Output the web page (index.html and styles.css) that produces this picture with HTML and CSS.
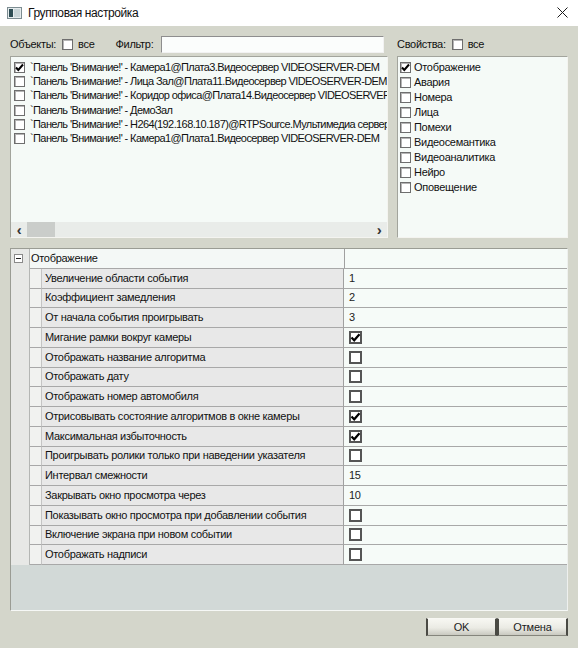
FILE: index.html
```html
<!DOCTYPE html>
<html lang="ru">
<head>
  <meta charset="UTF-8" />
  <title>Групповая настройка</title>
  <link rel="stylesheet" href="styles.css">
</head>
<body>
<div class="window">

  <!-- заголовок окна -->
  <div class="titlebar">
    <svg class="app-icon" width="16" height="14" viewBox="0 0 16 14">
      <rect x="0.5" y="1.5" width="14" height="11" fill="#e6ecee" stroke="#7d8d92"/>
      <rect x="2" y="3" width="4" height="8" fill="#2e4d54"/>
      <rect x="7" y="3" width="6" height="8" fill="#c9d5d8"/>
    </svg>
    <span class="title">Групповая настройка</span>
    <svg class="close" width="11" height="11" viewBox="0 0 11 11">
      <path d="M0.5 0.5 L10.5 10.5 M10.5 0.5 L0.5 10.5" stroke="#1a1a1a" stroke-width="1"/>
    </svg>
  </div>

  <div class="content">
    <div class="top">
      <div class="pane objects-pane">
        <div class="filter-row">
          <span>Объекты:</span>
          <span class="cb"></span>
          <span>все</span>
          <span class="filter-label">Фильтр:</span>
          <input class="filter" type="text">
        </div>
        <div class="listbox">
          <div class="items objects">
            <div class="item"><span class="cb"><svg viewBox="0 0 11 11"><path d="M2 5.5 L4.3 8 L9 2.5" /></svg></span><span class="text">`Панель 'Внимание!' - Камера1@Плата3.Видеосервер VIDEOSERVER-DEM</span></div>
            <div class="item"><span class="cb"></span><span class="text">`Панель 'Внимание!' - Лица Зал@Плата11.Видеосервер VIDEOSERVER-DEM</span></div>
            <div class="item"><span class="cb"></span><span class="text">`Панель 'Внимание!' - Коридор офиса@Плата14.Видеосервер VIDEOSERVER-DEM</span></div>
            <div class="item"><span class="cb"></span><span class="text">`Панель 'Внимание!' - ДемоЗал</span></div>
            <div class="item"><span class="cb"></span><span class="text">`Панель 'Внимание!' - H264(192.168.10.187)@RTPSource.Мультимедиа сервер VIDEOSERVER-DEM</span></div>
            <div class="item"><span class="cb"></span><span class="text">`Панель 'Внимание!' - Камера1@Плата1.Видеосервер VIDEOSERVER-DEM</span></div>
          </div>
          <div class="hscroll">
            <span class="arrow">&lsaquo;</span>
            <span class="thumb"></span>
            <span class="track"></span>
            <span class="arrow">&rsaquo;</span>
          </div>
        </div>
      </div>

      <div class="pane props-pane">
        <div class="filter-row">
          <span>Свойства:</span>
          <span class="cb"></span>
          <span>все</span>
        </div>
        <div class="listbox">
          <div class="items props">
            <div class="item"><span class="cb"><svg viewBox="0 0 11 11"><path d="M2 5.5 L4.3 8 L9 2.5" /></svg></span><span class="text">Отображение</span></div>
            <div class="item"><span class="cb"></span><span class="text">Авария</span></div>
            <div class="item"><span class="cb"></span><span class="text">Номера</span></div>
            <div class="item"><span class="cb"></span><span class="text">Лица</span></div>
            <div class="item"><span class="cb"></span><span class="text">Помехи</span></div>
            <div class="item"><span class="cb"></span><span class="text">Видеосемантика</span></div>
            <div class="item"><span class="cb"></span><span class="text">Видеоаналитика</span></div>
            <div class="item"><span class="cb"></span><span class="text">Нейро</span></div>
            <div class="item"><span class="cb"></span><span class="text">Оповещение</span></div>
          </div>
        </div>
      </div>
    </div>

    <!-- таблица свойств -->
    <div class="grid">
      <div class="row group">
        <div class="gutter"><span class="expander"></span></div>
        <div class="name">Отображение</div>
        <div class="value"></div>
      </div>
      <div class="row"><div class="gutter"></div><div class="indent"></div><div class="name">Увеличение области события</div><div class="value">1</div></div>
      <div class="row"><div class="gutter"></div><div class="indent"></div><div class="name">Коэффициент замедления</div><div class="value">2</div></div>
      <div class="row"><div class="gutter"></div><div class="indent"></div><div class="name">От начала события проигрывать</div><div class="value">3</div></div>
      <div class="row"><div class="gutter"></div><div class="indent"></div><div class="name">Мигание рамки вокруг камеры</div><div class="value"><span class="gcb"><svg viewBox="0 0 13 13"><path d="M2.5 6.5 L5.2 9.3 L10.5 3.2" /></svg></span></div></div>
      <div class="row"><div class="gutter"></div><div class="indent"></div><div class="name">Отображать название алгоритма</div><div class="value"><span class="gcb"></span></div></div>
      <div class="row"><div class="gutter"></div><div class="indent"></div><div class="name">Отображать дату</div><div class="value"><span class="gcb"></span></div></div>
      <div class="row"><div class="gutter"></div><div class="indent"></div><div class="name">Отображать номер автомобиля</div><div class="value"><span class="gcb"></span></div></div>
      <div class="row"><div class="gutter"></div><div class="indent"></div><div class="name">Отрисовывать состояние алгоритмов в окне камеры</div><div class="value"><span class="gcb"><svg viewBox="0 0 13 13"><path d="M2.5 6.5 L5.2 9.3 L10.5 3.2" /></svg></span></div></div>
      <div class="row"><div class="gutter"></div><div class="indent"></div><div class="name">Максимальная избыточность</div><div class="value"><span class="gcb"><svg viewBox="0 0 13 13"><path d="M2.5 6.5 L5.2 9.3 L10.5 3.2" /></svg></span></div></div>
      <div class="row"><div class="gutter"></div><div class="indent"></div><div class="name">Проигрывать ролики только при наведении указателя</div><div class="value"><span class="gcb"></span></div></div>
      <div class="row"><div class="gutter"></div><div class="indent"></div><div class="name">Интервал смежности</div><div class="value">15</div></div>
      <div class="row"><div class="gutter"></div><div class="indent"></div><div class="name">Закрывать окно просмотра через</div><div class="value">10</div></div>
      <div class="row"><div class="gutter"></div><div class="indent"></div><div class="name">Показывать окно просмотра при добавлении события</div><div class="value"><span class="gcb"></span></div></div>
      <div class="row"><div class="gutter"></div><div class="indent"></div><div class="name">Включение экрана при новом событии</div><div class="value"><span class="gcb"></span></div></div>
      <div class="row"><div class="gutter"></div><div class="indent"></div><div class="name">Отображать надписи</div><div class="value"><span class="gcb"></span></div></div>
    </div>

    <div class="buttons">
      <button type="button">OK</button>
      <button type="button">Отмена</button>
    </div>
  </div>

</div>
</body>
</html>
```

FILE: styles.css
```css
/* Окно в стиле старого WinForms */
body {
  margin: 0;
  font-family: "Liberation Sans", Arial, sans-serif;
  font-size: 11px;
  letter-spacing: -0.3px;
  line-height: 13px;
  color: #111;
}
.window {
  width: 578px;
  height: 648px;
  background-color: #d4d6cb;
  display: flex;
  flex-direction: column;
  overflow: hidden;
}
.titlebar {
  height: 26px;
  background-color: #fff;
  display: flex;
  align-items: center;
  padding: 0 10px 0 7px;
}
.app-icon {
  margin-right: 5px;
}
.title {
  font-size: 12px;
  letter-spacing: -0.4px;
  color: #111;
  flex: 1;
}
.close {
  margin-top: -2px;
}

.content {
  padding: 0 10px 0 10px;
  display: flex;
  flex-direction: column;
}
.top {
  display: flex;
  gap: 9px;
}
.objects-pane {
  width: 378px;
}
.props-pane {
  width: 172px;
}
.filter-row {
  height: 23px;
  padding-top: 7px;
  display: flex;
  align-items: center;
  white-space: nowrap;
}
.filter-row .cb {
  margin: 0 5px 0 6px;
}
.filter-label {
  margin-left: 21px;
  margin-right: 8px;
}
.filter {
  flex: none;
  width: 223px;
  height: 17px;
  box-sizing: border-box;
  border: 1px solid #8e8e8e;
  border-right-color: #f2f2f2;
  border-bottom-color: #f2f2f2;
  background-color: #fbfdfc;
  padding: 0;
}

.cb {
  display: inline-block;
  width: 11px;
  height: 11px;
  box-sizing: border-box;
  border: 1px solid #6e6e6e;
  box-shadow: inset 1px 1px 0 #b5b5b5;
  background-color: #fff;
  flex: none;
  position: relative;
}
.cb svg, .gcb svg {
  position: absolute;
  left: -1px;
  top: -1px;
  width: 11px;
  height: 11px;
  fill: none;
  stroke: #000;
  stroke-width: 2;
}
.listbox {
  height: 182px;
  box-sizing: border-box;
  border: 1px solid #a2a49c;
  border-right-color: #f4f4f0;
  border-bottom-color: #f4f4f0;
  background-color: #f5faf7;
  display: flex;
  flex-direction: column;
}
.items {
  flex: 1;
  padding: 3px 0 0 3px;
  overflow: hidden;
}
.item {
  height: 14.33px;
  display: flex;
  align-items: center;
  white-space: nowrap;
  overflow: hidden;
}
.item .cb {
  margin-right: 5px;
}
.item .text {
  line-height: 13px;
}
.objects .text {
  letter-spacing: -0.6px;
}
.props {
  padding-top: 3px;
  padding-left: 2px;
}
.props .item {
  height: 15px;
}
.props .item .cb {
  margin-right: 3px;
}

.hscroll {
  height: 15px;
  display: flex;
  align-items: center;
  background-color: #e9ece9;
}
.hscroll .arrow {
  width: 16px;
  text-align: center;
  font-size: 15px;
  font-weight: bold;
  color: #333;
  line-height: 13px;
}
.hscroll .thumb {
  width: 28px;
  height: 15px;
  background-color: #cacdca;
}
.hscroll .track {
  flex: 1;
}

/* таблица свойств */
.grid {
  margin-top: 10px;
  height: 363px;
  box-sizing: border-box;
  border: 1px solid #9a9c94;
  border-right-color: #eef0ee;
  border-bottom-color: #f6f8f6;
  background-color: #d2d9d7;
  overflow: hidden;
}
.row {
  display: flex;
  height: 19.75px;
}
.gutter {
  width: 18px;
  flex: none;
  background-color: #e7e8e6;
  border-right: 1px solid #b4b6b4;
  position: relative;
}
.indent {
  width: 11px;
  flex: none;
  background-color: #f1f2f0;
  border-bottom: 1px solid #a8a8a8;
  border-right: 1px solid #c4c4c4;
}
.name {
  width: 302px;
  flex: none;
  box-sizing: border-box;
  padding-left: 3px;
  background-color: #e8e8e8;
  border-bottom: 1px solid #a8a8a8;
  border-right: 1px solid #a0a0a0;
  display: flex;
  align-items: center;
  white-space: nowrap;
  overflow: hidden;
}
.value {
  flex: 1;
  box-sizing: border-box;
  padding-left: 5px;
  background-color: #f6fbf8;
  border-bottom: 1px solid #a8a8a8;
  display: flex;
  align-items: center;
  color: #222;
}
.group .name {
  width: 315px;
  padding-left: 1px;
  background-color: #f4f8f6;
}
.expander {
  position: absolute;
  left: 3px;
  top: 5px;
  width: 9px;
  height: 9px;
  box-sizing: border-box;
  border: 1px solid #8a8a8a;
  background-color: #fff;
}
.expander::after {
  content: "";
  position: absolute;
  left: 1px;
  top: 3px;
  width: 5px;
  height: 1px;
  background-color: #222;
}
.gcb {
  display: inline-block;
  width: 13px;
  height: 13px;
  box-sizing: border-box;
  border: 2px solid #555;
  background-color: #fff;
  position: relative;
}
.gcb svg {
  left: -2px;
  top: -2px;
  width: 13px;
  height: 13px;
  stroke-width: 2.2;
}

.buttons {
  margin-top: 7px;
  display: flex;
  justify-content: flex-end;
}
button {
  width: 71px;
  height: 18px;
  padding: 0;
  font-family: "Liberation Sans", Arial, sans-serif;
  font-size: 11px;
  letter-spacing: -0.2px;
  color: #1c1c1c;
  border: 1px solid #85857c;
  border-left: 2px solid #4a4a44;
  border-right: 2px solid #4a4a44;
  border-top-color: #f8f8f4;
  background: linear-gradient(to bottom, #f7f7f2 0%, #ebebe4 55%, #c9c9c0 100%);
}
```
